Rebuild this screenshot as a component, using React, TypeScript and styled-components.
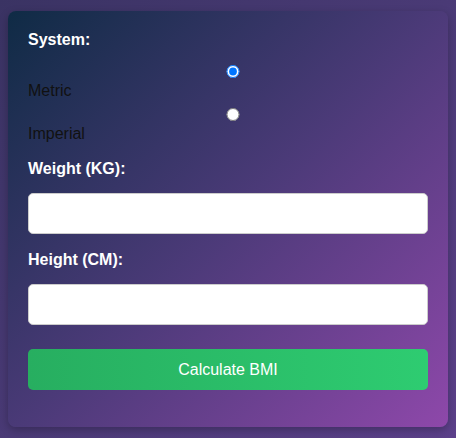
import React, { useState } from "react";
import styled, { createGlobalStyle } from "styled-components";

const GlobalStyle = createGlobalStyle`
  html, body {
    margin: 0;
    padding: 0;
  }
  body {
    min-height: 438px;
    background: linear-gradient(135deg, #3a3363 0%, #4a3a76 50%, #5c408a 100%);
    font-family: "Liberation Sans", Arial, sans-serif;
    font-size: 16px;
  }
`;

const Page = styled.div`
  padding: 11px 8px 8px 8px;
`;

const Card = styled.form`
  box-sizing: border-box;
  width: 440px;
  height: 416px;
  padding: 20px;
  border-radius: 8px;
  background: linear-gradient(135deg, #0f2b45 0%, #4b3a78 50%, #8e48aa 100%);
  box-shadow: 0 3px 8px rgba(0, 0, 0, 0.25);
`;

const Group = styled.div<{ $mb: number }>`
  margin-bottom: ${(p) => p.$mb}px;
`;

const FieldLabel = styled.label<{ $mb: number }>`
  display: block;
  color: #ffffff;
  font-weight: bold;
  line-height: 18px;
  margin-bottom: ${(p) => p.$mb}px;
`;

const RadioLabel = styled.label<{ $mt: number }>`
  display: block;
  color: #111111;
  margin-top: ${(p) => p.$mt}px;
  line-height: normal;
`;

const Radio = styled.input`
  width: 100%;
  margin: 3px 3px 0 5px;
  box-sizing: border-box;
`;

const TextInput = styled.input`
  display: block;
  box-sizing: border-box;
  width: 100%;
  height: 41px;
  padding: 10px;
  border: 1px solid #cccccc;
  border-radius: 5px;
  background: #ffffff;
  font-family: "Liberation Sans", Arial, sans-serif;
  font-size: 16px;
  outline: none;
`;

const Button = styled.button`
  display: block;
  width: 100%;
  height: 41px;
  border: none;
  border-radius: 5px;
  background: linear-gradient(90deg, #27ae60, #2ecc71);
  color: #ffffff;
  font-family: "Liberation Sans", Arial, sans-serif;
  font-size: 16px;
  cursor: pointer;
`;

export default function App() {
  const [system, setSystem] = useState("metric");
  return (
    <>
      <GlobalStyle />
      <Page>
        <Card onSubmit={(e) => e.preventDefault()}>
          <Group $mb={17}>
            <FieldLabel $mb={0}>System:</FieldLabel>
            <RadioLabel $mt={13}>
              <Radio
                type="radio"
                name="system"
                checked={system === "metric"}
                onChange={() => setSystem("metric")}
              />
              Metric
            </RadioLabel>
            <RadioLabel $mt={5}>
              <Radio
                type="radio"
                name="system"
                checked={system === "imperial"}
                onChange={() => setSystem("imperial")}
              />
              Imperial
            </RadioLabel>
          </Group>
          <Group $mb={17}>
            <FieldLabel $mb={15}>Weight (KG):</FieldLabel>
            <TextInput type="text" />
          </Group>
          <Group $mb={24}>
            <FieldLabel $mb={15}>Height (CM):</FieldLabel>
            <TextInput type="text" />
          </Group>
          <Button type="submit">Calculate BMI</Button>
        </Card>
      </Page>
    </>
  );
}
